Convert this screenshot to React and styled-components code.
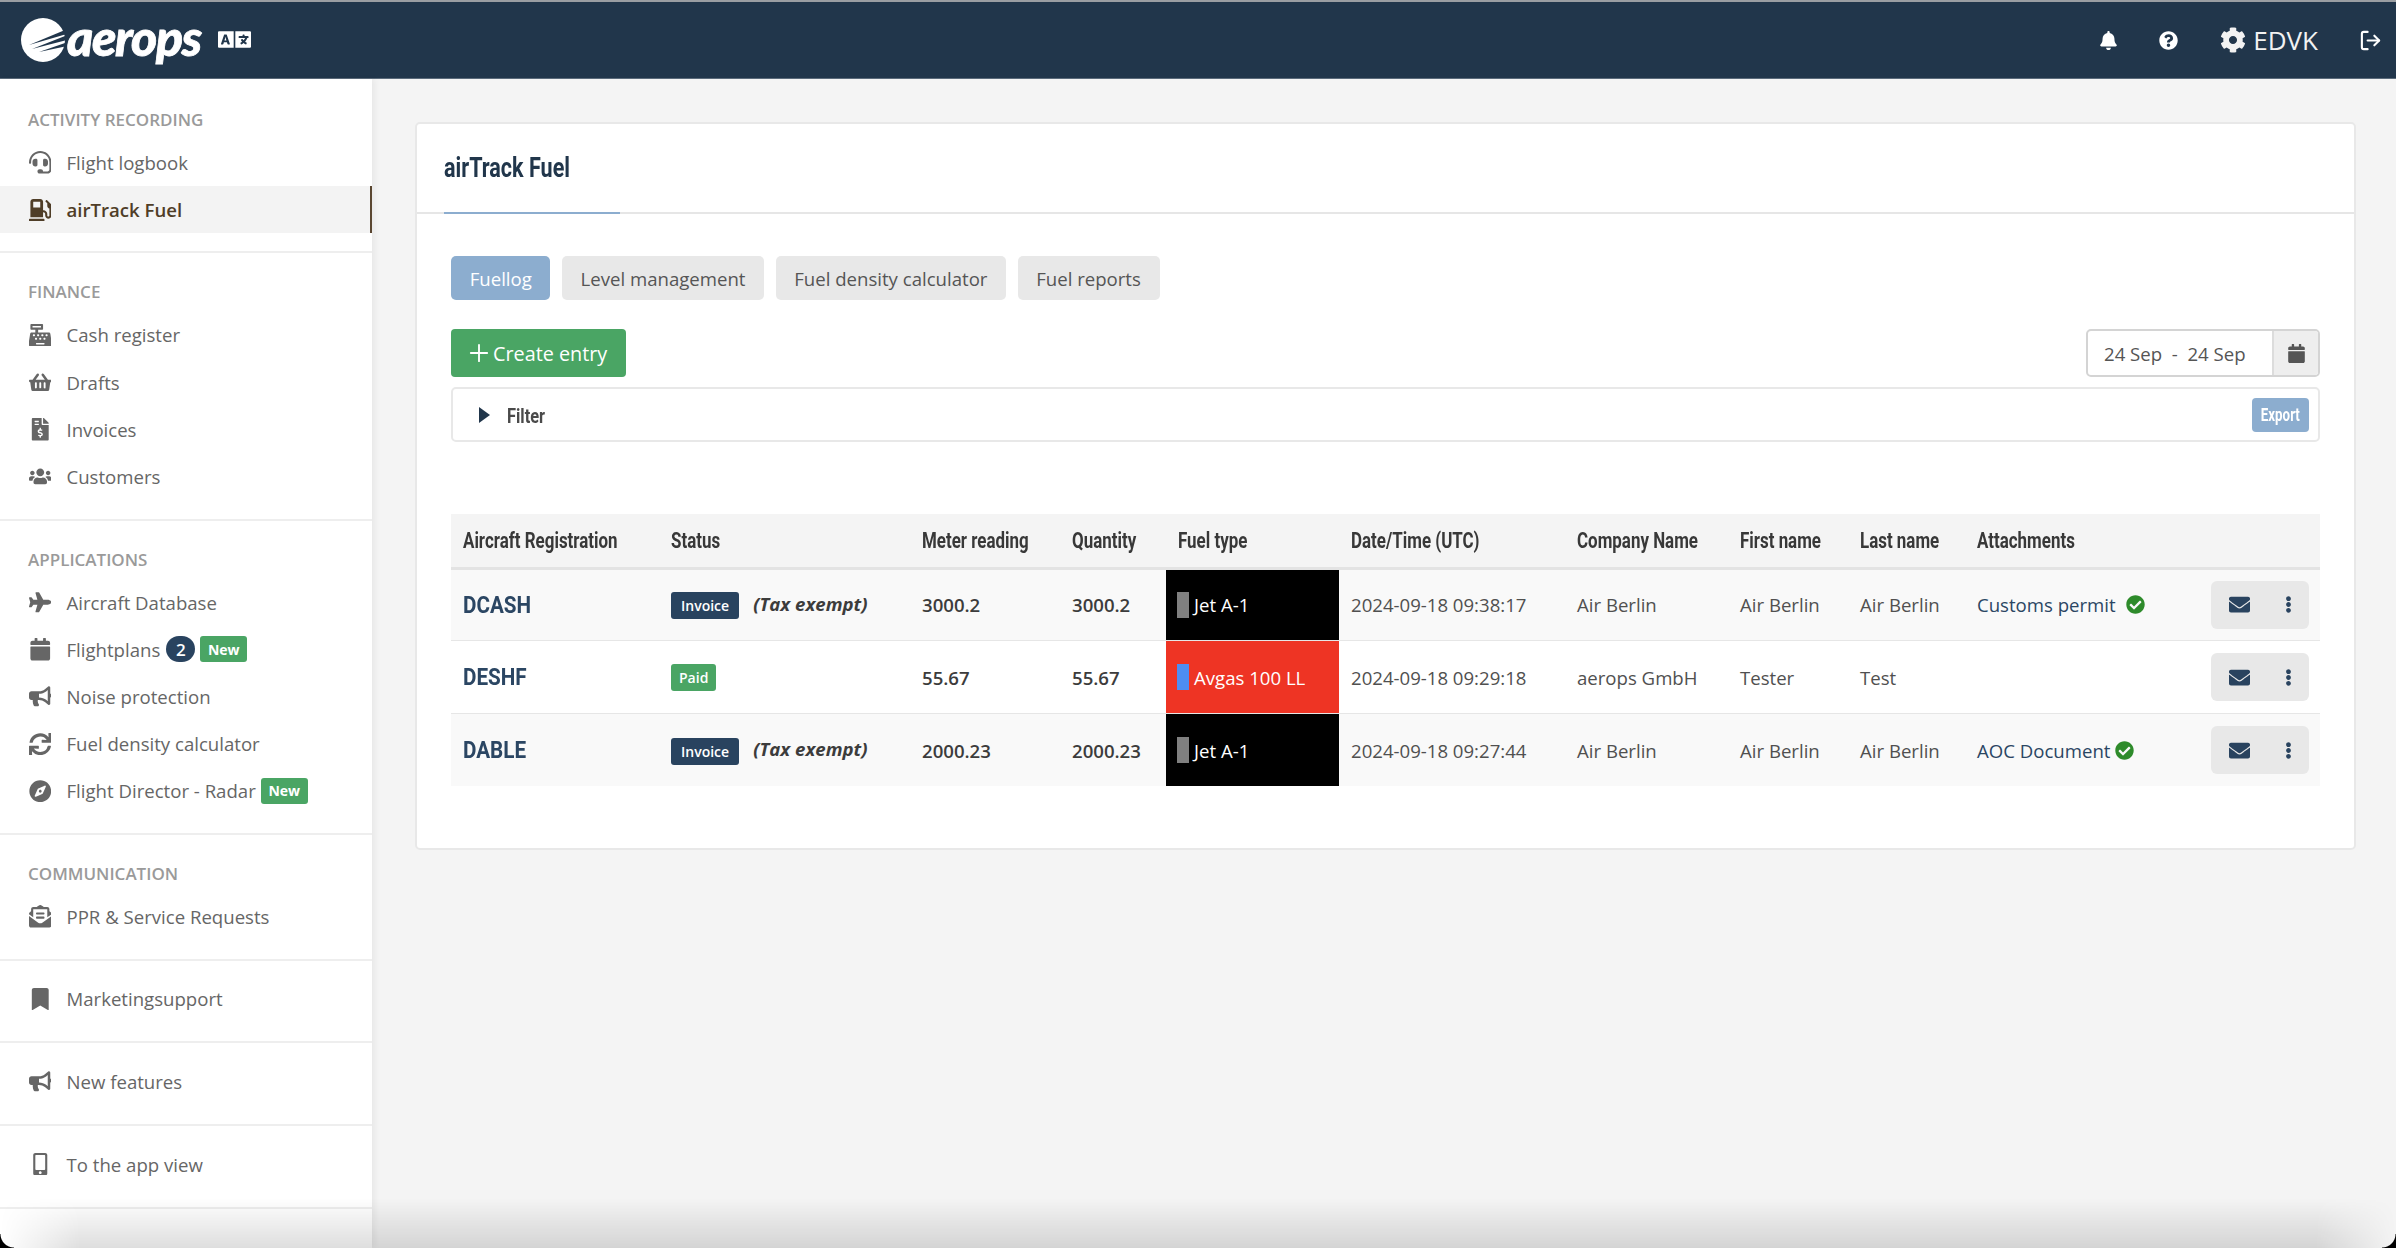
import React from 'react';
import styled, { createGlobalStyle } from 'styled-components';
import {
  FaBell,
  FaBookmark,
  FaBullhorn,
  FaCalendar,
  FaCashRegister,
  FaCheckCircle,
  FaCog,
  FaCompass,
  FaEllipsisV,
  FaEnvelope,
  FaEnvelopeOpenText,
  FaFileInvoiceDollar,
  FaGasPump,
  FaHeadset,
  FaLanguage,
  FaMobileAlt,
  FaPlane,
  FaQuestionCircle,
  FaShoppingBasket,
  FaSync,
  FaUsers
} from 'react-icons/fa';
import { LogOut, Plus } from 'lucide-react';

const NAVY = '#21364b';
const BLUE = '#8cadcf';
const GREEN = '#4aa564';
const BODY_FONT = '"Open Sans", "Noto Sans", sans-serif';
const HEADING_FONT = 'Roboto, "Liberation Sans", sans-serif';

const GlobalStyle = createGlobalStyle`
  html, body {
    margin: 0;
    height: 100%;
    background: #f4f4f4;
    overflow: hidden;
  }
  body {
    font-family: ${BODY_FONT};
    font-size: 18.6px;
    color: #555;
  }
  * {
    box-sizing: border-box;
  }
`;

const sections = [
  {
    title: 'ACTIVITY RECORDING',
    first: true,
    items: [
      { icon: FaHeadset, label: 'Flight logbook' },
      { icon: FaGasPump, label: 'airTrack Fuel', active: true }
    ]
  },
  {
    title: 'FINANCE',
    items: [
      { icon: FaCashRegister, label: 'Cash register' },
      { icon: FaShoppingBasket, label: 'Drafts' },
      { icon: FaFileInvoiceDollar, label: 'Invoices' },
      { icon: FaUsers, label: 'Customers' }
    ]
  },
  {
    title: 'APPLICATIONS',
    items: [
      { icon: FaPlane, label: 'Aircraft Database' },
      { icon: FaCalendar, label: 'Flightplans', count: 2, isNew: true },
      { icon: FaBullhorn, label: 'Noise protection' },
      { icon: FaSync, label: 'Fuel density calculator' },
      { icon: FaCompass, label: 'Flight Director - Radar', isNew: true }
    ]
  },
  {
    title: 'COMMUNICATION',
    items: [{ icon: FaEnvelopeOpenText, label: 'PPR & Service Requests' }]
  },
  { items: [{ icon: FaBookmark, label: 'Marketingsupport' }] },
  { items: [{ icon: FaBullhorn, label: 'New features' }] },
  { items: [{ icon: FaMobileAlt, label: 'To the app view' }] }
];

const columns = [
  { title: 'Aircraft Registration', width: 208 },
  { title: 'Status', width: 251 },
  { title: 'Meter reading', width: 150 },
  { title: 'Quantity', width: 106 },
  { title: 'Fuel type', width: 173 },
  { title: 'Date/Time (UTC)', width: 226 },
  { title: 'Company Name', width: 163 },
  { title: 'First name', width: 120 },
  { title: 'Last name', width: 117 },
  { title: 'Attachments', width: 234 },
  { title: '', width: 121 }
];

const entries = [
  {
    reg: 'DCASH',
    status: 'Invoice',
    taxExempt: true,
    meter: '3000.2',
    quantity: '3000.2',
    fuel: 'Jet A-1',
    date: '2024-09-18 09:38:17',
    company: 'Air Berlin',
    first: 'Air Berlin',
    last: 'Air Berlin',
    attachment: 'Customs permit',
    checkGap: 10
  },
  {
    reg: 'DESHF',
    status: 'Paid',
    meter: '55.67',
    quantity: '55.67',
    fuel: 'Avgas 100 LL',
    date: '2024-09-18 09:29:18',
    company: 'aerops GmbH',
    first: 'Tester',
    last: 'Test'
  },
  {
    reg: 'DABLE',
    status: 'Invoice',
    taxExempt: true,
    meter: '2000.23',
    quantity: '2000.23',
    fuel: 'Jet A-1',
    date: '2024-09-18 09:27:44',
    company: 'Air Berlin',
    first: 'Air Berlin',
    last: 'Air Berlin',
    attachment: 'AOC Document',
    checkGap: 5
  }
];

function Logo() {
  return (
    <LogoMark viewBox='0 0 44 44' aria-hidden='true'>
      <circle cx='22' cy='22' r='22' fill='#fff' />
      <path d='M44 12 L8 27 L46 16 Z' fill={NAVY} />
      <path d='M44 18 L11 31 L46 22 Z' fill={NAVY} />
      <path d='M44 25 L18 34 L46 28 Z' fill={NAVY} />
    </LogoMark>
  );
}

function NavSection({ section }) {
  return (
    <Section $first={section.first} $titled={!!section.title}>
      {section.title && <SectionTitle>{section.title}</SectionTitle>}
      {section.items.map(item => (
        <NavItem key={item.label} $active={item.active}>
          <NavIcon>
            <item.icon />
          </NavIcon>
          <span>{item.label}</span>
          {item.count && <CountBadge>{item.count}</CountBadge>}
          {item.isNew && <NewBadge>New</NewBadge>}
        </NavItem>
      ))}
    </Section>
  );
}

function EntryRow({ entry }) {
  const isJet = entry.fuel === 'Jet A-1';
  return (
    <tr>
      <RegCell>
        <RegLabel>{entry.reg}</RegLabel>
      </RegCell>
      <Cell>
        <StatusBadge $paid={entry.status === 'Paid'}>{entry.status}</StatusBadge>
        {entry.taxExempt && <TaxNote>(Tax exempt)</TaxNote>}
      </Cell>
      <NumberCell>{entry.meter}</NumberCell>
      <NumberCell>{entry.quantity}</NumberCell>
      <FuelCell $jet={isJet}>
        <FuelLabel>
          <FuelMarker $jet={isJet} />
          {entry.fuel}
        </FuelLabel>
      </FuelCell>
      <Cell>{entry.date}</Cell>
      <Cell>{entry.company}</Cell>
      <Cell>{entry.first}</Cell>
      <Cell>{entry.last}</Cell>
      <Cell>
        {entry.attachment && (
          <Attachment>
            {entry.attachment}
            <CheckMark $gap={entry.checkGap}>
              <FaCheckCircle />
            </CheckMark>
          </Attachment>
        )}
      </Cell>
      <Cell>
        <RowActions>
          <RowAction>
            <FaEnvelope />
          </RowAction>
          <RowAction $small>
            <FaEllipsisV />
          </RowAction>
        </RowActions>
      </Cell>
    </tr>
  );
}

export default function App() {
  return (
    <Page>
      <GlobalStyle />
      <TopBar>
        <Brand>
          <Logo />
          <BrandName>aerops</BrandName>
          <LanguageIcon>
            <FaLanguage />
          </LanguageIcon>
        </Brand>
        <TopActions>
          <TopIcon $size={19}>
            <FaBell />
          </TopIcon>
          <TopIcon $size={19}>
            <FaQuestionCircle />
          </TopIcon>
          <UserMenu>
            <FaCog />
            EDVK
          </UserMenu>
          <TopIcon $size={23}>
            <LogOut strokeWidth={2.2} />
          </TopIcon>
        </TopActions>
      </TopBar>
      <Body>
        <Sidebar>
          {sections.map((section, i) => (
            <NavSection key={i} section={section} />
          ))}
        </Sidebar>
        <Main>
          <Card>
            <CardHeader>
              <CardTitle>
                <TitleLabel>airTrack Fuel</TitleLabel>
              </CardTitle>
            </CardHeader>
            <CardBody>
              <Tabs>
                <Tab $active>Fuellog</Tab>
                <Tab>Level management</Tab>
                <Tab>Fuel density calculator</Tab>
                <Tab>Fuel reports</Tab>
              </Tabs>
              <Toolbar>
                <CreateButton>
                  <Plus size={28} strokeWidth={1.6} />
                  Create entry
                </CreateButton>
                <DateRange>
                  <DateValue>24 Sep&nbsp; - &nbsp;24 Sep</DateValue>
                  <DateAddon>
                    <FaCalendar />
                  </DateAddon>
                </DateRange>
              </Toolbar>
              <FilterBar>
                <FilterToggle>
                  <FilterCaret />
                  <FilterLabel>Filter</FilterLabel>
                </FilterToggle>
                <ExportButton>
                  <ExportLabel>Export</ExportLabel>
                </ExportButton>
              </FilterBar>
              <Table>
                <colgroup>
                  {columns.map((col, i) => (
                    <Column key={i} $width={col.width} />
                  ))}
                </colgroup>
                <thead>
                  <tr>
                    {columns.map((col, i) => (
                      <HeadCell key={i}>
                        <HeadLabel>{col.title}</HeadLabel>
                      </HeadCell>
                    ))}
                  </tr>
                </thead>
                <tbody>
                  {entries.map(entry => (
                    <EntryRow key={entry.reg} entry={entry} />
                  ))}
                </tbody>
              </Table>
            </CardBody>
          </Card>
        </Main>
      </Body>
      <BottomShade />
      <WindowCorner />
      <WindowCorner $right />
    </Page>
  );
}

const Page = styled.div`
  position: relative;
  width: 2396px;
  height: 1248px;
  overflow: hidden;
  display: flex;
  flex-direction: column;
`;

const TopBar = styled.header`
  flex: 0 0 79px;
  display: flex;
  align-items: center;
  justify-content: space-between;
  padding: 0 14px 0 21px;
  background: ${NAVY};
  border-top: 2px solid #9a9ea2;
  border-bottom: 1px solid #5b6b7b;
`;

const Brand = styled.div`
  display: flex;
  align-items: center;
`;

const LogoMark = styled.svg`
  width: 44px;
  height: 44px;
`;

const BrandName = styled.span`
  margin: -6px 0 0 2px;
  font-family: 'Lato', ${BODY_FONT};
  font-size: 50px;
  line-height: 44px;
  font-weight: 900;
  font-style: italic;
  letter-spacing: -1.4px;
  color: #fff;
  -webkit-text-stroke: 0.8px #fff;
`;

const LanguageIcon = styled.span`
  display: flex;
  margin: -2px 0 0 17px;
  font-size: 33px;
  color: #fff;
`;

const TopActions = styled.div`
  display: flex;
  align-items: center;
  gap: 41px;
`;

const TopIcon = styled.span`
  display: flex;
  color: #fff;
  font-size: ${p => p.$size}px;

  svg {
    width: ${p => p.$size}px;
    height: ${p => p.$size}px;
  }
`;

const UserMenu = styled.span`
  display: flex;
  align-items: center;
  gap: 7px;
  margin-left: 1px;
  font-size: 26px;
  font-weight: 500;
  color: #f2f2f2;

  svg {
    font-size: 26px;
  }
`;

const Body = styled.div`
  flex: 1;
  display: flex;
  min-height: 0;
`;

const Sidebar = styled.nav`
  flex: 0 0 372px;
  background: #fff;
  box-shadow: 3px 0 6px rgba(0, 0, 0, 0.05);
`;

const Section = styled.section`
  padding: ${p => (p.$first ? '27px 0 18px' : p.$titled ? '25px 0 18.5px' : '14.5px 0 19px')};
  border-bottom: 2px solid #eee;
`;

const SectionTitle = styled.div`
  padding-left: 28px;
  margin-bottom: 6px;
  font-size: 17px;
  line-height: 27px;
  font-weight: 600;
  color: #9a9a9a;
`;

const NavItem = styled.a`
  display: flex;
  align-items: center;
  height: 47.2px;
  padding-left: 26.5px;
  color: ${p => (p.$active ? '#4f3d27' : '#666')};
  font-weight: ${p => (p.$active ? 600 : 400)};
  background: ${p => (p.$active ? '#f3f3f3' : 'transparent')};
  border-right: 2px solid ${p => (p.$active ? '#5a4630' : 'transparent')};
`;

const NavIcon = styled.span`
  flex: 0 0 27px;
  display: flex;
  justify-content: center;
  margin-right: 13px;

  svg {
    flex: none;
    width: auto;
    height: 22.5px;
  }
`;

const CountBadge = styled.span`
  display: flex;
  align-items: center;
  justify-content: center;
  width: 29px;
  height: 26px;
  margin-left: 6px;
  border-radius: 13px;
  background: #29435f;
  color: #fff;
  font-size: 17px;
  font-weight: 600;
`;

const NewBadge = styled.span`
  display: flex;
  align-items: center;
  justify-content: center;
  width: 47px;
  height: 26px;
  margin-left: 5px;
  border-radius: 3px;
  background: ${GREEN};
  color: #fff;
  font-size: 14px;
  font-weight: 700;
`;

const Main = styled.main`
  flex: 1;
  padding: 43px 40px 0 43px;
`;

const Card = styled.div`
  height: 728px;
  background: #fff;
  border: 2px solid #e8e8e8;
  border-radius: 5px;
`;

const CardHeader = styled.div`
  height: 90px;
  padding-left: 27px;
  border-bottom: 2px solid #e6e6e6;
`;

const CardTitle = styled.h1`
  width: 176px;
  height: 90px;
  margin: 0;
  font-family: ${HEADING_FONT};
  font-size: 28px;
  line-height: 87px;
  font-weight: 700;
  color: ${NAVY};
  border-bottom: 2px solid ${BLUE};
`;

// The original heading face is a condensed one, none is installed
const TitleLabel = styled.span`
  display: inline-block;
  transform: scaleX(0.77);
  transform-origin: left center;
  white-space: nowrap;
`;

const CardBody = styled.div`
  padding: 42px 34px 0;
`;

const Tabs = styled.div`
  display: flex;
  gap: 11.4px;
`;

const Tab = styled.button`
  height: 44px;
  padding: 0 18.7px;
  border: 0;
  border-radius: 5px;
  background: ${p => (p.$active ? BLUE : '#e8e8e8')};
  color: ${p => (p.$active ? '#fff' : '#555')};
  font: 400 18.6px ${BODY_FONT};
`;

const Toolbar = styled.div`
  display: flex;
  justify-content: space-between;
  margin-top: 29px;
`;

const CreateButton = styled.button`
  display: flex;
  align-items: center;
  width: 175px;
  height: 48px;
  padding: 0 0 0 14px;
  border: 0;
  border-radius: 4px;
  background: ${GREEN};
  color: #fff;
  font: 400 19.8px ${BODY_FONT};
`;

const DateRange = styled.div`
  display: flex;
  width: 234px;
  height: 48px;
  border: 2px solid #d4d4d4;
  border-radius: 5px;
  overflow: hidden;
`;

const DateValue = styled.div`
  flex: 1;
  display: flex;
  align-items: center;
  padding-left: 16px;
  white-space: nowrap;
`;

const DateAddon = styled.div`
  flex: 0 0 46px;
  display: flex;
  align-items: center;
  justify-content: center;
  background: #eee;
  border-left: 2px solid #dcdcdc;
  font-size: 19px;
`;

const FilterBar = styled.div`
  display: flex;
  align-items: center;
  justify-content: space-between;
  height: 55px;
  margin-top: 10px;
  padding: 0 9px 0 26px;
  border: 2px solid #e8e8e8;
  border-radius: 5px;
`;

const FilterToggle = styled.div`
  display: flex;
  align-items: center;
  gap: 17px;
`;

const FilterCaret = styled.i`
  width: 0;
  height: 0;
  border-left: 11px solid ${NAVY};
  border-top: 8.5px solid transparent;
  border-bottom: 8.5px solid transparent;
`;

const FilterLabel = styled.span`
  display: inline-block;
  padding-top: 2px;
  transform: scaleX(0.78);
  transform-origin: left center;
  font-family: ${HEADING_FONT};
  font-size: 21px;
  font-weight: 700;
  color: #4a4a4a;
`;

const ExportButton = styled.button`
  width: 57px;
  height: 34px;
  padding: 0;
  border: 0;
  border-radius: 4px;
  background: ${BLUE};
`;

const ExportLabel = styled.span`
  display: inline-block;
  transform: scaleX(0.74);
  font-family: ${HEADING_FONT};
  font-size: 18px;
  font-weight: 700;
  color: #fff;
`;

const Table = styled.table`
  width: 1869px;
  margin-top: 72px;
  table-layout: fixed;
  border-collapse: collapse;

  tbody tr {
    height: 72.8px;
    border-bottom: 1px solid #e6e6e6;
  }
  tbody tr:last-child {
    border-bottom: 0;
  }
  tbody tr:nth-child(odd) {
    background: #f9f9f9;
  }
`;

const Column = styled.col`
  width: ${p => p.$width}px;
`;

const HeadCell = styled.th`
  height: 54px;
  padding: 0 12px;
  text-align: left;
  white-space: nowrap;
  background: #f4f4f4;
  border-bottom: 3px solid #e3e3e3;
  font-family: ${HEADING_FONT};
  font-size: 22px;
  font-weight: 700;
  color: #383838;
`;

const HeadLabel = styled.span`
  display: inline-block;
  transform: scaleX(0.77);
  transform-origin: left center;
`;

const Cell = styled.td`
  padding: 0 12px;
  white-space: nowrap;
  color: #505050;
`;

const RegCell = styled(Cell)`
  font-family: ${HEADING_FONT};
  font-size: 24px;
  font-weight: 700;
  color: #2b4663;
`;

const RegLabel = styled.span`
  display: inline-block;
  transform: scaleX(0.86);
  transform-origin: left center;
`;

const NumberCell = styled(Cell)`
  font-weight: 600;
  color: #3c3c3c;
`;

const StatusBadge = styled.span`
  display: inline-block;
  height: 27px;
  padding: 0 ${p => (p.$paid ? 8 : 10)}px;
  border-radius: 3px;
  background: ${p => (p.$paid ? GREEN : '#29435f')};
  color: #fff;
  font-size: 14px;
  line-height: 27px;
  font-weight: 600;
  vertical-align: middle;
`;

const TaxNote = styled.span`
  margin-left: 14px;
  font-weight: 700;
  font-style: italic;
  color: #3c3c3c;
`;

const FuelCell = styled(Cell)`
  background: ${p => (p.$jet ? '#000' : '#ee3424')};
  color: #fff;
`;

const FuelLabel = styled.span`
  display: flex;
  align-items: center;
  gap: 5px;
`;

const FuelMarker = styled.i`
  width: 12px;
  height: 26px;
  margin-left: -1px;
  background: ${p => (p.$jet ? '#808080' : '#4d8df2')};
`;

const Attachment = styled.a`
  display: inline-flex;
  align-items: center;
  color: #2b4663;
`;

const CheckMark = styled.span`
  display: flex;
  margin-left: ${p => p.$gap}px;
  font-size: 19px;
  color: #2e8b2b;
`;

const RowActions = styled.div`
  display: flex;
  align-items: center;
  width: 98px;
  height: 48px;
  border-radius: 6px;
  background: #e8e8e8;
`;

const RowAction = styled.span`
  flex: 0 0 ${p => (p.$small ? 40 : 57)}px;
  display: flex;
  justify-content: center;
  font-size: ${p => (p.$small ? 17 : 21)}px;
  color: #29435f;
`;

const BottomShade = styled.div`
  position: absolute;
  left: 0;
  right: 0;
  bottom: 0;
  height: 50px;
  pointer-events: none;
  background: linear-gradient(to bottom, rgba(0, 0, 0, 0), rgba(0, 0, 0, 0.13));
  mask-image: linear-gradient(to right, transparent, #000 80px, #000 calc(100% - 80px), transparent);
`;

const WindowCorner = styled.div`
  position: absolute;
  bottom: 0;
  ${p => (p.$right ? 'right: 0;' : 'left: 0;')}
  width: 14px;
  height: 14px;
  background: radial-gradient(
    circle at ${p => (p.$right ? '0 0' : '100% 0')},
    transparent 13px,
    #000 14px
  );
`;
